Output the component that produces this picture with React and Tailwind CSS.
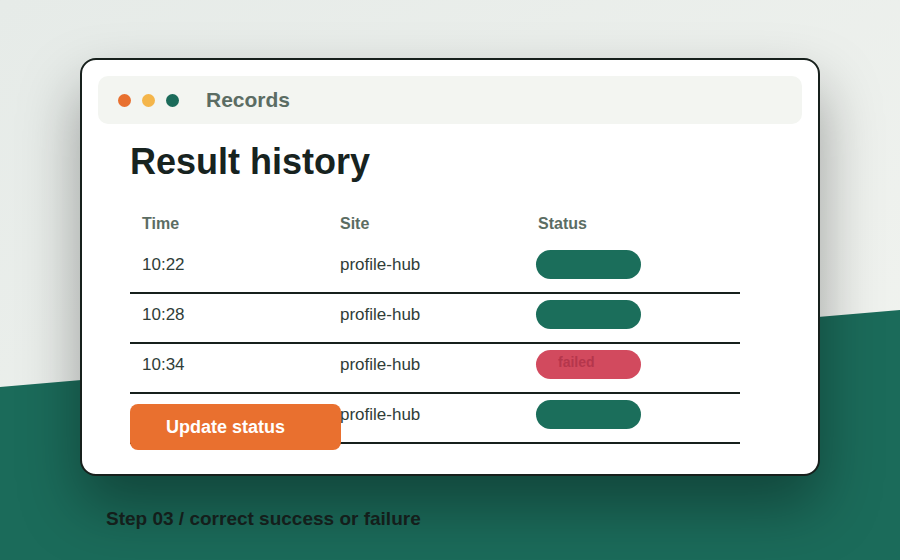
import React from 'react';

const rows = [
  { time: '10:22', site: 'profile-hub', status: 'ok' },
  { time: '10:28', site: 'profile-hub', status: 'ok' },
  { time: '10:34', site: 'profile-hub', status: 'failed' },
  { time: '', site: 'profile-hub', status: 'ok' },
];

const StatusPill = ({ status }) => {
  if (status === 'failed') {
    return (
      <div className="w-[105px] h-[29px] rounded-full bg-[#d24a5e] pl-[22px] pb-[5px] flex items-center">
        <span className="text-[14px] font-bold text-[#b5364c]">failed</span>
      </div>
    );
  }
  return <div className="w-[105px] h-[29px] rounded-full bg-[#1b6e5b]" />;
};

export default function App() {
  return (
    <div className="relative w-[900px] h-[560px] overflow-hidden bg-gradient-to-br from-[#e6ebe8] to-[#f2f4f0] font-['Liberation_Sans',Arial,sans-serif]">
      {/* green slope behind the card */}
      <div className="absolute inset-0 bg-[#1b6b5a] [clip-path:polygon(0_387px,900px_310px,900px_560px,0_560px)]" />

      <div className="relative flex flex-col pt-[58px] pl-[80px]">
        {/* Card */}
        <div className="relative w-[740px] h-[418px] bg-white border-2 border-[#17201c] rounded-[16px] p-[16px] shadow-[0_30px_60px_rgba(0,0,0,0.35)]">
          {/* Title bar */}
          <div className="h-[48px] rounded-[10px] bg-[#f3f5f1] flex items-center pl-[20px]">
            <div className="flex gap-[11px]">
              <span className="w-[13px] h-[13px] rounded-full bg-[#e8702f]" />
              <span className="w-[13px] h-[13px] rounded-full bg-[#f4b54a]" />
              <span className="w-[13px] h-[13px] rounded-full bg-[#1b6b5a]" />
            </div>
            <span className="ml-[27px] text-[21px] font-bold text-[#5b6c63]">Records</span>
          </div>

          <div className="pl-[32px]">
            <h1 className="mt-[18px] text-[36px] leading-[40px] font-bold text-[#17231f]">Result history</h1>

            <div className="relative mt-[22px] w-[610px]">
              <div className="grid grid-cols-[198px_198px_1fr] h-[40px] items-center text-[16px] font-bold text-[#5b6c63]">
                <span className="pl-[12px]">Time</span>
                <span className="pl-[12px]">Site</span>
                <span className="pl-[12px]">Status</span>
              </div>
              {rows.map((r, i) => (
                <div
                  key={i}
                  className="grid grid-cols-[198px_198px_1fr] h-[50px] items-center border-b-2 border-[#17201c] pb-[7px] text-[17px] text-[#2f3d38]"
                >
                  <span className="pl-[12px]">{r.time}</span>
                  <span className="pl-[12px]">{r.site}</span>
                  <div className="pl-[10px]">
                    <StatusPill status={r.status} />
                  </div>
                </div>
              ))}

              <button className="absolute left-0 top-[200px] w-[211px] h-[46px] rounded-[8px] bg-[#e9702f] text-left pl-[36px] text-[18px] font-bold text-white">
                Update status
              </button>
            </div>
          </div>
        </div>

        <p className="mt-[29px] ml-[26px] text-[19px] font-bold text-[#17231f]">Step 03 / correct success or failure</p>
      </div>
    </div>
  );
}
